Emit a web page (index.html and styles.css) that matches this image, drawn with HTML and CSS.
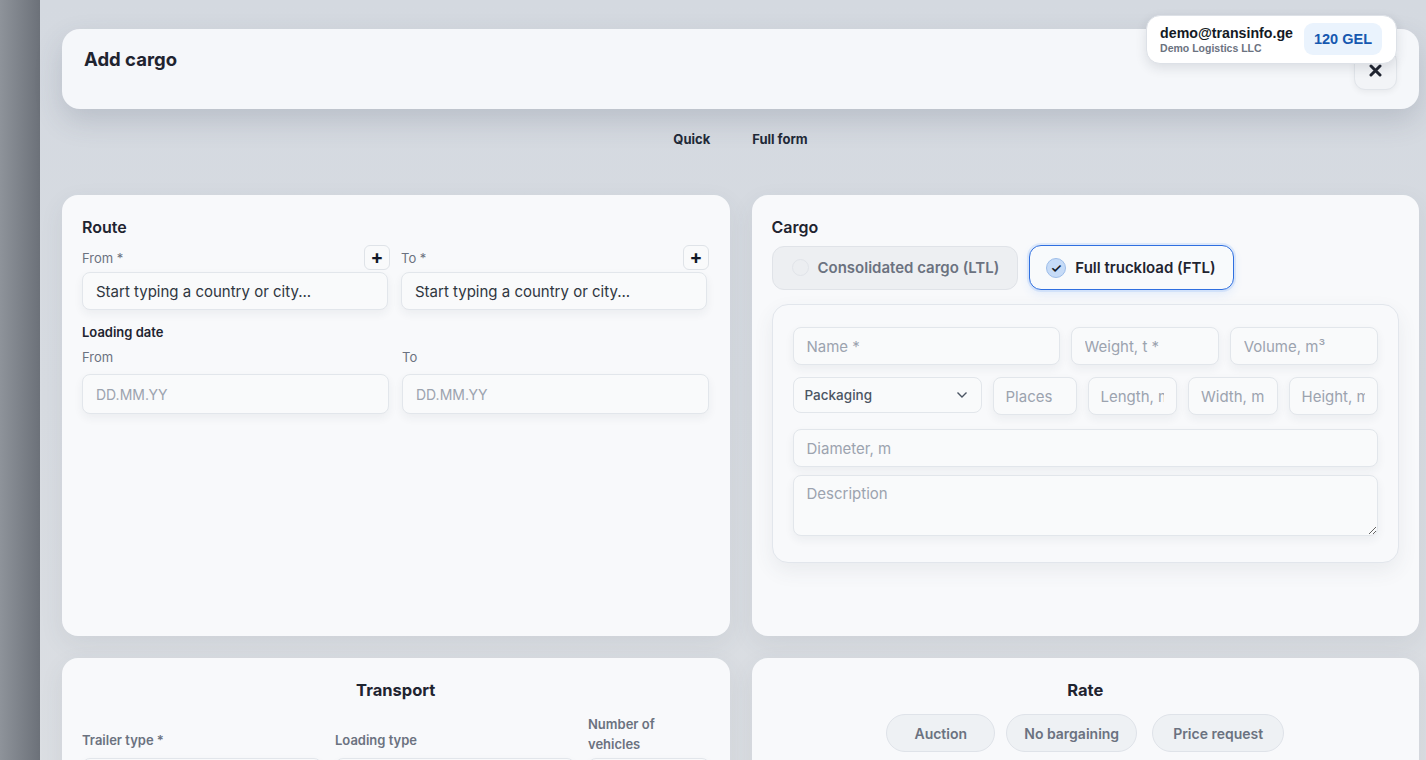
FILE: index.html
```html
<!DOCTYPE html>
<html lang="en">
<head>
    <meta charset="UTF-8">
    <meta name="viewport" content="width=device-width, initial-scale=1.0">
    <title>Add cargo</title>
    <link rel="stylesheet" href="styles.css">
</head>
<body>
    <div class="shell">
        <div class="sidebar"></div>
        <main class="main">
            <!-- account badge -->
            <div class="account">
                <div class="account-info">
                    <div class="account-mail">demo@transinfo.ge</div>
                    <div class="account-company">Demo Logistics LLC</div>
                </div>
                <div class="balance">120 GEL</div>
            </div>

            <header class="head-card">
                <h1>Add cargo</h1>
                <button class="close-btn" aria-label="Close">
                    <svg width="13" height="13" viewBox="0 0 13 13"><path d="M2 2 L11 11 M11 2 L2 11" stroke="#1f2430" stroke-width="3" stroke-linecap="round"/></svg>
                </button>
            </header>

            <nav class="tabs">
                <button class="tab">Quick</button>
                <button class="tab">Full form</button>
            </nav>

            <div class="grid">
                <section class="card">
                    <h2 class="card-title">Route</h2>
                    <div class="two-col">
                        <div class="field">
                            <div class="field-head">
                                <label>From *</label>
                                <button class="plus">+</button>
                            </div>
                            <input class="input city" type="text" placeholder="Start typing a country or city...">
                        </div>
                        <div class="field">
                            <div class="field-head">
                                <label>To *</label>
                                <button class="plus">+</button>
                            </div>
                            <input class="input city" type="text" placeholder="Start typing a country or city...">
                        </div>
                    </div>
                    <div class="sub-title">Loading date</div>
                    <div class="two-col dates">
                        <div class="field">
                            <label class="date-label">From</label>
                            <input class="input date" type="text" placeholder="DD.MM.YY">
                        </div>
                        <div class="field">
                            <label class="date-label">To</label>
                            <input class="input date" type="text" placeholder="DD.MM.YY">
                        </div>
                    </div>
                </section>

                <section class="card">
                    <h2 class="card-title">Cargo</h2>
                    <div class="kind">
                        <button class="kind-btn">
                            <span class="radio"></span>
                            Consolidated cargo (LTL)
                        </button>
                        <button class="kind-btn active">
                            <span class="radio">✓</span>
                            Full truckload (FTL)
                        </button>
                    </div>
                    <div class="cargo-box">
                        <div class="row row-main">
                            <input class="input" type="text" placeholder="Name *">
                            <input class="input" type="text" placeholder="Weight, t *">
                            <input class="input" type="text" placeholder="Volume, m³">
                        </div>
                        <div class="row row-dims">
                            <div class="select-wrap">
                                <select class="select">
                                    <option>Packaging</option>
                                </select>
                                <svg class="chevron" width="12" height="8" viewBox="0 0 12 8"><path d="M1.5 1.5 L6 6 L10.5 1.5" fill="none" stroke="#4b5563" stroke-width="1.4"/></svg>
                            </div>
                            <input class="input" type="text" placeholder="Places">
                            <input class="input" type="text" placeholder="Length, m">
                            <input class="input" type="text" placeholder="Width, m">
                            <input class="input" type="text" placeholder="Height, m">
                        </div>
                        <input class="input" type="text" placeholder="Diameter, m">
                        <textarea class="input area" placeholder="Description"></textarea>
                    </div>
                </section>

                <section class="card card-low">
                    <h2 class="card-title center">Transport</h2>
                    <div class="transport">
                        <div class="field">
                            <label class="low-label single">Trailer type *</label>
                            <input class="input" type="text">
                        </div>
                        <div class="field">
                            <label class="low-label single">Loading type</label>
                            <input class="input" type="text">
                        </div>
                        <div class="field">
                            <label class="low-label">Number of vehicles</label>
                            <input class="input" type="text" value="1">
                        </div>
                    </div>
                </section>

                <section class="card card-low">
                    <h2 class="card-title center">Rate</h2>
                    <div class="pills">
                        <button class="pill">Auction</button>
                        <button class="pill">No bargaining</button>
                        <button class="pill">Price request</button>
                    </div>
                </section>
            </div>
        </main>
    </div>
</body>
</html>
```

FILE: styles.css
```css
html, body {
    height: 100%;
    overflow: hidden;
}
body {
    margin: 0;
    font-family: Inter, "Noto Sans", sans-serif;
    color: #1f2937;
    background: #d5dae1;
}
button, input, select, textarea {
    font-family: inherit;
}
.shell {
    display: flex;
    min-height: 100%;
}
.sidebar {
    width: 40px;
    flex: none;
    background: linear-gradient(to right, #8e939a, #6c7179);
}
.main {
    position: relative;
    flex: 1;
    padding: 29px 7px 0 22px;
    background: linear-gradient(to bottom, #d4d9e0, #d7dbe1 400px, #dcdfe3);
}

/* account badge */
.account {
    position: absolute;
    top: 15px;
    right: 29px;
    display: flex;
    align-items: center;
    gap: 11px;
    padding: 7px 14px 8px 13px;
    background: #ffffff;
    border: 1px solid #dde1e7;
    border-radius: 14px;
    box-shadow: 0 4px 12px rgba(30, 40, 60, 0.12);
    z-index: 2;
}
.account-mail {
    font-family: "Liberation Sans", Arial, sans-serif;
    font-weight: bold;
    font-size: 14.2px;
    color: #141a24;
}
.account-company {
    font-family: "Liberation Sans", Arial, sans-serif;
    font-weight: bold;
    font-size: 10.5px;
    color: #6b7280;
    margin-top: 1px;
}
.balance {
    font-family: "Liberation Sans", Arial, sans-serif;
    font-weight: bold;
    font-size: 14.5px;
    color: #1658b0;
    background: #eaf3fd;
    border-radius: 9px;
    padding: 8px 10px;
}

/* header */
.head-card {
    height: 80px;
    box-sizing: border-box;
    display: flex;
    justify-content: space-between;
    align-items: flex-start;
    padding: 19px 22px 0 22px;
    background: #f5f7fa;
    border-radius: 18px;
    box-shadow: 0 12px 28px rgba(60, 72, 92, 0.18);
}
.head-card h1 {
    margin: 0;
    font-size: 18.5px;
    font-weight: 700;
    color: #1f2430;
}
.close-btn {
    margin-top: 2px;
    width: 43px;
    height: 40px;
    display: flex;
    align-items: center;
    justify-content: center;
    background: #f2f4f7;
    border: 1px solid #e1e5ea;
    border-radius: 11px;
    box-shadow: 0 2px 6px rgba(0, 0, 0, 0.06);
    cursor: pointer;
}

/* tabs */
.tabs {
    display: flex;
    justify-content: center;
    gap: 42px;
    padding: 21px 0 0 0;
    height: 65px;
    box-sizing: border-box;
}
.tab {
    background: none;
    border: none;
    padding: 0;
    font-size: 13px;
    font-weight: 700;
    color: #1f2937;
    height: 18px;
    cursor: pointer;
}

/* cards */
.grid {
    margin-top: 21px;
    display: grid;
    grid-template-columns: 1fr 1fr;
    gap: 22px;
}
.card {
    min-height: 441px;
    box-sizing: border-box;
    padding: 20px;
    background: #f8f9fb;
    border-radius: 16px;
    box-shadow: 0 8px 24px rgba(60, 72, 92, 0.08);
}
.card-low {
    min-height: 200px;
}
.card-title {
    margin: 0 0 6px 0;
    font-size: 16px;
    font-weight: 600;
    color: #1f2430;
    line-height: 24px;
}
.card-title.center {
    text-align: center;
    font-size: 16.5px;
    font-weight: 700;
    margin-top: 0;
}

/* route */
.two-col {
    display: grid;
    grid-template-columns: 306px 306px;
    gap: 13px;
}
.field {
    display: flex;
    flex-direction: column;
}
.field-head {
    display: flex;
    justify-content: space-between;
    align-items: center;
    margin-bottom: 2px;
}
.field-head label, .date-label {
    font-size: 13px;
    color: #6b7280;
}
.plus {
    width: 26px;
    height: 25px;
    padding: 0;
    margin-right: -2px;
    background: #f9fafb;
    border: 1px solid #dfe3e8;
    border-radius: 6px;
    font-size: 19px;
    font-weight: 700;
    line-height: 20px;
    color: #111827;
    cursor: pointer;
}
.input {
    box-sizing: border-box;
    height: 38px;
    padding: 0 13px;
    background: #f9fafb;
    border: 1px solid #e2e6eb;
    border-radius: 8px;
    box-shadow: 0 4px 10px rgba(40, 50, 70, 0.06);
    outline: none;
    color: #374151;
    width: 100%;
    font-size: 15px;
}
.input::placeholder {
    color: #9ca3af;
}
.input.city::placeholder {
    color: #2f3640;
}
.sub-title {
    margin-top: 14px;
    font-size: 13px;
    font-weight: 600;
    color: #1f2430;
}
.dates {
    margin-top: 9px;
    grid-template-columns: 307px 307px;
}
.date-label {
    margin-bottom: 9px;
}
.input.date {
    height: 40px;
    font-size: 14px;
}

/* cargo */
.kind {
    display: flex;
    gap: 11px;
    align-items: center;
}
.kind-btn {
    display: flex;
    align-items: center;
    gap: 9px;
    height: 44px;
    padding: 0 18px 0 19px;
    background: #edeff2;
    border: 1px solid #e0e3e8;
    border-radius: 12px;
    font-size: 15px;
    font-weight: 600;
    color: #6b7280;
    cursor: pointer;
}
.kind-btn .radio {
    width: 17px;
    height: 17px;
    border-radius: 50%;
    border: 1px solid #e1e4e9;
    background: #eceef1;
    box-sizing: border-box;
    display: flex;
    align-items: center;
    justify-content: center;
    font-size: 13px;
}
.kind-btn.active {
    height: 45px;
    background: #f8fafc;
    border: 1.5px solid #2f6fe0;
    color: #1f2430;
    padding: 0 17px 0 16px;
    box-shadow: 0 0 0 2px rgba(59, 130, 246, 0.12), 0 4px 10px rgba(59, 130, 246, 0.12);
}
.kind-btn.active .radio {
    width: 20px;
    height: 20px;
    background: #c6dbf7;
    border: 1px solid #9dbde9;
    color: #111827;
}
.cargo-box {
    margin-top: 14px;
    padding: 22px 20px 26px 20px;
    display: flex;
    flex-direction: column;
    gap: 11px;
    background: #f8f9fb;
    border: 1px solid #e2e6ec;
    border-radius: 16px;
    box-shadow: 0 8px 20px rgba(60, 72, 92, 0.08);
}
.row {
    display: grid;
    gap: 11px;
}
.row-main {
    grid-template-columns: 267px 1fr 1fr;
}
.row-dims {
    grid-template-columns: 189px 84px 1fr 1fr 1fr;
    margin-top: 1px;
    margin-bottom: 3px;
}
.row-dims .input {
    padding: 0 12px;
}
.select-wrap {
    position: relative;
}
.select {
    appearance: none;
    width: 100%;
    height: 36px;
    padding: 0 11px;
    background: #f9fafb;
    border: 1px solid #e2e6eb;
    border-radius: 8px;
    font-size: 13.5px;
    font-weight: 500;
    color: #4b5563;
    outline: none;
}
.chevron {
    position: absolute;
    right: 14px;
    top: 14px;
    pointer-events: none;
}
.area {
    height: 61px;
    padding-top: 8px;
    resize: vertical;
    margin-top: -3px;
}

/* transport */
.transport {
    margin-top: 12px;
    display: grid;
    grid-template-columns: 240px 240px 1fr;
    gap: 13px;
    align-items: end;
}
.low-label {
    font-size: 13px;
    font-weight: 600;
    color: #6b7280;
    line-height: 20px;
    margin-bottom: 4px;
    max-width: 90px;
}
.low-label.single {
    max-width: none;
    margin-bottom: 8px;
}

/* rate */
.pills {
    display: flex;
    justify-content: center;
    gap: 11px;
    margin-top: 12px;
}
.pill {
    height: 38px;
    min-width: 109px;
    padding: 0 17px;
    background: #eef1f4;
    border: 1px solid #dfe3e9;
    border-radius: 19px;
    font-size: 14px;
    font-weight: 600;
    color: #6b7280;
    cursor: pointer;
}
.pill:nth-child(3) {
    margin-left: 4px;
    padding: 0 20px;
}
```
